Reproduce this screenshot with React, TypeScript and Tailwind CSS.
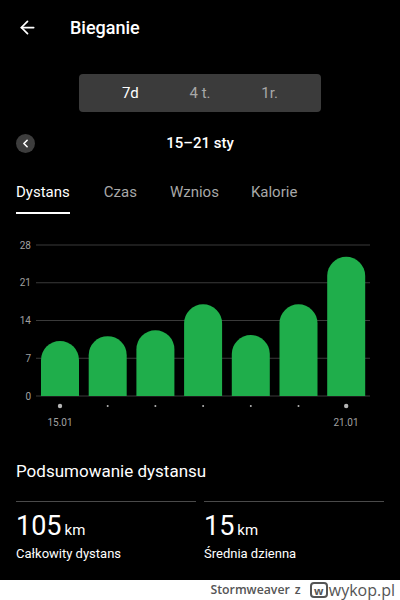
import { ArrowLeft, ChevronLeft } from "lucide-react"

const bars = [10.2, 11.1, 12.2, 17, 11.3, 17, 25.8]
const ticks = [28, 21, 14, 7, 0]

const Chart = () => {
  const top = 244
  const bottom = 395
  const y = (v: number) => bottom - (v / 28) * (bottom - top)
  return (
    <svg width="400" height="200" viewBox="0 230 400 200" className="block">
      {ticks.map((t) => (
        <g key={t}>
          <line x1="36" x2="370" y1={y(t)} y2={y(t)} stroke="#3a3a3a" strokeWidth="1" />
          <text x="31" y={y(t) + 3.5} textAnchor="end" fontSize="10" fill="#a0a0a0" fontFamily="Roboto, sans-serif">{t}</text>
        </g>
      ))}
      {bars.map((v, i) => {
        const cx = 60 + i * 47.7
        return (
          <g key={i}>
            <path
              d={`M${cx - 19} ${bottom} V${y(v) + 19} A19 19 0 0 1 ${cx + 19} ${y(v) + 19} V${bottom} Z`}
              fill="#1fae4b"
            />
            <circle cx={cx} cy="405" r={i === 0 || i === 6 ? 2.2 : 1} fill="#b5b5b5" />
          </g>
        )
      })}
      <text x="60" y="425" textAnchor="middle" fontSize="10" fill="#a0a0a0" fontFamily="Roboto, sans-serif">15.01</text>
      <text x="346" y="425" textAnchor="middle" fontSize="10" fill="#a0a0a0" fontFamily="Roboto, sans-serif">21.01</text>
    </svg>
  )
}

const App = () => {
  return (
    <div className="w-[400px] h-[600px] overflow-hidden bg-black font-['Roboto',sans-serif]">
      <div className="h-[580px] flex flex-col">
        <div className="flex items-center h-[54px] pl-[17px]">
          <ArrowLeft size={21} color="#fff" strokeWidth={2} />
          <div className="ml-[32px] text-white text-[18px] font-medium">Bieganie</div>
        </div>

        <div className="flex justify-center mt-[20px]">
          <div className="w-[242px] h-[38px] rounded-[4px] bg-[#3b3b3b] grid grid-cols-3 items-center text-[15px]">
            <div className="text-center text-white pl-[22px]">7d</div>
            <div className="text-center text-[#a8a8a8]">4 t.</div>
            <div className="text-center text-[#a8a8a8] pr-[22px]">1r.</div>
          </div>
        </div>

        <div className="relative flex justify-center items-center h-[22px] mt-[20px]">
          <div className="absolute left-[16px] w-[19px] h-[19px] rounded-full bg-[#3d3d3d] flex items-center justify-center">
            <ChevronLeft size={13} color="#fff" strokeWidth={3} />
          </div>
          <div className="text-white text-[15px] font-medium">15–21 sty</div>
        </div>

        <div className="flex mt-[28px] px-[16px] text-[15px]">
          <div className="flex flex-col">
            <div className="text-white leading-[20px]">Dystans</div>
            <div className="h-[2px] bg-white mt-[10px]" />
          </div>
          <div className="ml-[34px] text-[#a8a8a8] leading-[20px]">Czas</div>
          <div className="ml-[33px] text-[#a8a8a8] leading-[20px]">Wznios</div>
          <div className="ml-[32px] text-[#a8a8a8] leading-[20px]">Kalorie</div>
        </div>

        <div className="mt-[17px]">
          <Chart />
        </div>

        <div className="px-[16px] mt-[28px] text-white text-[17px]">Podsumowanie dystansu</div>

        <div className="grid grid-cols-2 gap-[8px] px-[16px] mt-[16px]">
          <div>
            <div className="h-px bg-[#4a4a4a]" />
            <div className="flex items-baseline mt-[7px] text-white">
              <span className="text-[27px] leading-[34px]">105</span>
              <span className="text-[15px] ml-[3px]">km</span>
            </div>
            <div className="text-white text-[13px] mt-[1px]">Całkowity dystans</div>
          </div>
          <div>
            <div className="h-px bg-[#4a4a4a]" />
            <div className="flex items-baseline mt-[7px] text-white">
              <span className="text-[27px] leading-[34px]">15</span>
              <span className="text-[15px] ml-[3px]">km</span>
            </div>
            <div className="text-white text-[13px] mt-[1px]">Średnia dzienna</div>
          </div>
        </div>
      </div>

      <div className="h-[20px] bg-white flex items-center justify-end pr-[5px] text-[#555] font-['Open_Sans',sans-serif]">
        <span className="text-[12.3px] font-semibold">Stormweaver</span>
        <span className="text-[12.3px] font-semibold ml-[5px]">z</span>
        <span className="ml-[9px] w-[18px] h-[16px] rounded-[4px] border-[2px] border-[#555] flex items-center justify-center text-[11px] font-bold leading-none">w</span>
        <span className="text-[16px] ml-[1px] leading-none">wykop.pl</span>
      </div>
    </div>
  )
}

export default App
